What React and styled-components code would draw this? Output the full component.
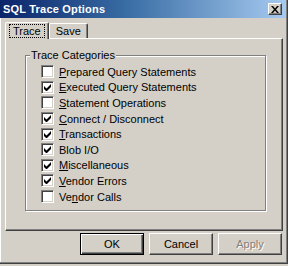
import React from "react";
import styled, { createGlobalStyle } from "styled-components";

const categories = [
  { pre: "", key: "P", post: "repared Query Statements", checked: false },
  { pre: "", key: "E", post: "xecuted Query Statements", checked: true },
  { pre: "", key: "S", post: "tatement Operations", checked: false },
  { pre: "", key: "C", post: "onnect / Disconnect", checked: true },
  { pre: "", key: "T", post: "ransactions", checked: true },
  { pre: "Blob I/O", key: "", post: "", checked: true },
  { pre: "", key: "M", post: "iscellaneous", checked: true },
  { pre: "", key: "V", post: "endor Errors", checked: true },
  { pre: "Ve", key: "n", post: "dor Calls", checked: false },
];

const App = () => {
  return (
    <>
      <GlobalStyle />
      <Window>
        <TitleBar>
          <Title>SQL Trace Options</Title>
          <CloseButton>
            <svg width="8" height="7" viewBox="0 0 8 7">
              <path d="M0 0h2l2 2.5L6 0h2L5 3.5 8 7H6L4 4.5 2 7H0l3-3.5z" fill="#000" />
            </svg>
          </CloseButton>
        </TitleBar>

        <Body>
          <TabRow>
            <Tab active>
              <Focus>Trace</Focus>
            </Tab>
            <Tab>Save</Tab>
          </TabRow>
          <Panel>
            <GroupBox>
              <Legend>Trace Categories</Legend>
              <List>
                {categories.map((c, i) => (
                  <Row key={i}>
                    <Box>
                      {c.checked && (
                        <svg width="7" height="7" viewBox="0 0 7 7">
                          <path d="M0 2v3l2 2h1l4-4V0L2.5 4.5z" fill="#000" />
                        </svg>
                      )}
                    </Box>
                    <Label>
                      {c.pre}
                      {c.key && <u>{c.key}</u>}
                      {c.post}
                    </Label>
                  </Row>
                ))}
              </List>
            </GroupBox>
          </Panel>
          <ButtonRow>
            <Button primary>OK</Button>
            <Button>Cancel</Button>
            <Button disabled>Apply</Button>
          </ButtonRow>
        </Body>
      </Window>
    </>
  );
};

const GlobalStyle = createGlobalStyle`
  html, body {
    margin: 0;
    padding: 0;
    background: #d4d0c8;
  }
  body {
    font-family: "Liberation Sans", Arial, sans-serif;
    font-size: 11px;
    color: #000;
  }
`;

const Window = styled.div`
  width: 288px;
  height: 264px;
  box-sizing: border-box;
  background: #d4d0c8;
  border-right: 1px solid #404040;
  border-bottom: 1px solid #404040;
  box-shadow: inset -1px -1px 0 #808080, inset 1px 0 0 #ffffff;
  display: flex;
  flex-direction: column;
`;

const TitleBar = styled.div`
  height: 18px;
  margin-right: 1px;
  background: linear-gradient(to right, #0a246a 0%, #3a6ea5 45%, #a6caf0 100%);
  display: flex;
  align-items: center;
  justify-content: space-between;
  padding: 0 3px 0 3px;
`;

const Title = styled.span`
  color: #fff;
  font-weight: bold;
  font-size: 11px;
  letter-spacing: 0.2px;
`;

const CloseButton = styled.div`
  width: 14px;
  height: 12px;
  box-sizing: border-box;
  background: #d4d0c8;
  border-top: 1px solid #fff;
  border-left: 1px solid #fff;
  border-right: 1px solid #404040;
  border-bottom: 1px solid #404040;
  box-shadow: inset -1px -1px 0 #808080;
  display: flex;
  align-items: center;
  justify-content: center;
  margin-right: 1px;
`;

const Body = styled.div`
  padding: 4px 4px 0 5px;
  display: flex;
  flex-direction: column;
`;

const TabRow = styled.div`
  display: flex;
  align-items: flex-end;
  height: 16px;
  position: relative;
  z-index: 1;
`;

const Tab = styled.div`
  box-sizing: border-box;
  height: ${(p) => (p.active ? "17px" : "15px")};
  padding: ${(p) => (p.active ? "0 3px" : "0 6px")};
  margin-bottom: ${(p) => (p.active ? "-1px" : "0")};
  background: #d4d0c8;
  border-top: 1px solid #fff;
  border-left: 1px solid #fff;
  border-right: 1px solid #404040;
  box-shadow: inset -1px 0 0 #808080;
  border-radius: 2px 2px 0 0;
  display: flex;
  align-items: center;
  font-size: 11px;
`;

const Focus = styled.span`
  border: 1px dotted #000;
  padding: 0 3px;
  line-height: 12px;
`;

const Panel = styled.div`
  width: 278px;
  height: 193px;
  box-sizing: border-box;
  border-top: 1px solid #fff;
  border-left: 1px solid #fff;
  border-right: 1px solid #404040;
  border-bottom: 1px solid #404040;
  box-shadow: inset -1px -1px 0 #808080;
  padding: 16px 0 0 19px;
`;

const GroupBox = styled.div`
  position: relative;
  width: 241px;
  height: 156px;
  box-sizing: border-box;
  border: 1px solid #808080;
  box-shadow: inset 1px 1px 0 #fff, 1px 1px 0 #fff;
  padding: 8px 0 0 15px;
`;

const Legend = styled.span`
  position: absolute;
  top: -7px;
  left: 4px;
  padding: 0 1px;
  background: #d4d0c8;
  line-height: 13px;
`;

const List = styled.div`
  display: flex;
  flex-direction: column;
`;

const Row = styled.div`
  display: flex;
  align-items: center;
  height: 15.6px;
  gap: 5px;
`;

const Box = styled.div`
  width: 13px;
  height: 13px;
  box-sizing: border-box;
  background: #fff;
  border-top: 1px solid #808080;
  border-left: 1px solid #808080;
  border-right: 1px solid #fff;
  border-bottom: 1px solid #fff;
  box-shadow: inset 1px 1px 0 #404040, inset -1px -1px 0 #d4d0c8;
  display: flex;
  align-items: center;
  justify-content: center;
`;

const Label = styled.span`
  white-space: nowrap;
`;

const ButtonRow = styled.div`
  display: flex;
  justify-content: flex-end;
  gap: 5px;
  padding: 2px 1px 0 0;
`;

const Button = styled.div`
  width: 64px;
  height: 22px;
  box-sizing: border-box;
  border-top: 1px solid ${(p) => (p.primary ? "#000" : "#fff")};
  border-left: 1px solid ${(p) => (p.primary ? "#000" : "#fff")};
  border-right: 1px solid ${(p) => (p.primary ? "#000" : "#404040")};
  border-bottom: 1px solid ${(p) => (p.primary ? "#000" : "#404040")};
  box-shadow: ${(p) =>
    p.primary
      ? "inset 1px 1px 0 #fff, inset -1px -1px 0 #404040, inset -2px -2px 0 #808080"
      : "inset -1px -1px 0 #808080"};
  display: flex;
  align-items: center;
  justify-content: center;
  color: ${(p) => (p.disabled ? "#808080" : "#000")};
  text-shadow: ${(p) => (p.disabled ? "1px 1px 0 #fff" : "none")};
`;

export default App;
